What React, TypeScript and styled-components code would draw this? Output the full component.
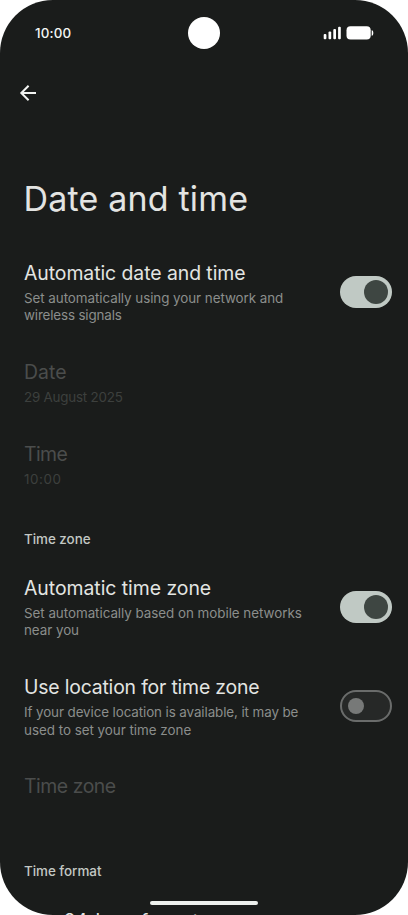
import React from 'react';
import styled, { createGlobalStyle } from 'styled-components';

const GlobalStyle = createGlobalStyle`
  * { box-sizing: border-box; }
  html, body { margin: 0; background: #fff; }
  body { font-family: Inter, Roboto, sans-serif; }
`;

const Screen = styled.main`
  position: relative;
  width: 408px;
  height: 915px;
  overflow: hidden;
  border-radius: 53px;
  background: #1a1c1b;
`;

const StatusBar = styled.header`
  display: grid;
  grid-template-columns: 1fr 32px 1fr;
  align-items: center;
  height: 65px;
  padding: 0 34px 0 33px;
  color: #f4f6f4;
`;

const Clock = styled.time`
  padding: 1px 0 0 2px;
  font-size: 13.4px;
  font-weight: 500;
  letter-spacing: 0.14px;
`;

const Camera = styled.div`
  width: 32px;
  height: 32px;
  border-radius: 50%;
  background: #fff;
`;

const StatusIcons = styled.svg`
  justify-self: end;
  display: block;
  margin-top: 1px;
`;

const NavBar = styled.nav`
  display: flex;
  align-items: center;
  height: 56px;
  padding-left: 16px;
`;

const BackButton = styled.button`
  display: flex;
  padding: 0;
  border: 0;
  background: none;
  color: #f1f3f1;
`;

const PageTitle = styled.h1`
  margin: 58px 0 0;
  padding-left: 23.6px;
  height: 63.8px;
  font-size: 34px;
  font-weight: 400;
  line-height: 40px;
  letter-spacing: 0.17px;
  color: #e3e4e2;
`;

const Row = styled.section`
  display: flex;
  align-items: center;
  justify-content: space-between;
  padding: 18px 16px 17px 24px;
`;

const SectionLabel = styled.h2<{ $tall?: boolean }>`
  margin: 0;
  height: ${p => (p.$tall ? 76 : 52.1)}px;
  padding: ${p => (p.$tall ? 46.2 : 23.2)}px 24px 0;
  font-size: 13.4px;
  font-weight: 500;
  line-height: 20px;
  letter-spacing: -0.02px;
  color: #c3c8c4;
`;

const Label = styled.div<{ $spacing: number; $disabled?: boolean }>`
  font-size: 19.4px;
  line-height: 24px;
  white-space: nowrap;
  letter-spacing: ${p => p.$spacing}px;
  color: ${p => (p.$disabled ? '#4b4d4c' : '#e3e5e2')};
`;

const Summary = styled.div<{ $disabled?: boolean }>`
  margin-top: 5.1px;
  font-size: 13.4px;
  line-height: 17.6px;
  color: ${p => (p.$disabled ? '#3d403e' : '#8b8e8c')};
`;

const SummaryLine = styled.div<{ $spacing: number }>`
  white-space: nowrap;
  letter-spacing: ${p => p.$spacing}px;
`;

const Track = styled.button<{ $on: boolean }>`
  display: flex;
  align-items: center;
  justify-content: ${p => (p.$on ? 'flex-end' : 'flex-start')};
  flex: none;
  width: 52px;
  height: 32px;
  margin-bottom: 2.2px;
  padding: ${p => (p.$on ? '0 4px' : '0 6px')};
  border: ${p => (p.$on ? '0' : '2px solid #6a6c6b')};
  border-radius: 16px;
  background: ${p => (p.$on ? '#c0c9c4' : '#262827')};
`;

const Thumb = styled.span<{ $on: boolean }>`
  width: ${p => (p.$on ? 24 : 16)}px;
  height: ${p => (p.$on ? 24 : 16)}px;
  border-radius: 50%;
  background: ${p => (p.$on ? '#3e4642' : '#777978')};
`;

const HomeBar = styled.div`
  position: absolute;
  left: 150px;
  bottom: 10px;
  width: 108px;
  height: 4px;
  border-radius: 2px;
  background: #edf0ed;
`;

interface SettingProps {
  label: string;
  spacing: number;
  lines?: [string, number][];
  disabled?: boolean;
  on?: boolean;
}

function Setting({ label, spacing, lines, disabled, on }: SettingProps) {
  return (
    <Row>
      <div>
        <Label $spacing={spacing} $disabled={disabled}>{label}</Label>
        {lines && (
          <Summary $disabled={disabled}>
            {lines.map(([text, ls]) => <SummaryLine key={text} $spacing={ls}>{text}</SummaryLine>)}
          </Summary>
        )}
      </div>
      {on !== undefined && (
        <Track $on={on} role="switch" aria-checked={on} aria-label={label}><Thumb $on={on} /></Track>
      )}
    </Row>
  );
}

export default function App() {
  return (
    <>
      <GlobalStyle />
      <Screen>
        <StatusBar>
          <Clock>10:00</Clock>
          <Camera />
          <StatusIcons width="51" height="14" viewBox="0 0 51 14" fill="#fff">
            <rect x="0.7" y="8" width="2.7" height="5.3" rx="1" />
            <rect x="5.5" y="5.4" width="2.7" height="7.9" rx="1" />
            <rect x="10.3" y="3" width="2.7" height="10.3" rx="1" />
            <rect x="15.1" y="0.8" width="2.7" height="12.5" rx="1" />
            <rect x="23.5" y="0.2" width="24.2" height="13.4" rx="4" />
            <path d="M48.7 4.2c1.2.2 1.6 1.2 1.6 2.8s-.4 2.6-1.6 2.8z" />
          </StatusIcons>
        </StatusBar>
        <NavBar>
          <BackButton aria-label="Back">
            <svg width="24" height="24" viewBox="0 0 24 24" fill="none" stroke="currentColor" strokeWidth="2">
              <path d="M20 12H5.5M12.6 4.7 5.3 12l7.3 7.3" />
            </svg>
          </BackButton>
        </NavBar>
        <PageTitle>Date and time</PageTitle>
        <Setting label="Automatic date and time" spacing={-0.055} on
          lines={[['Set automatically using your network and', -0.055], ['wireless signals', -0.15]]} />
        <Setting label="Date" spacing={0.1} disabled lines={[['29 August 2025', -0.22]]} />
        <Setting label="Time" spacing={-0.55} disabled lines={[['10:00', 0.6]]} />
        <SectionLabel>Time zone</SectionLabel>
        <Setting label="Automatic time zone" spacing={-0.03} on
          lines={[['Set automatically based on mobile networks', -0.04], ['near you', -0.05]]} />
        <Setting label="Use location for time zone" spacing={-0.18} on={false}
          lines={[['If your device location is available, it may be', -0.1], ['used to set your time zone', -0.02]]} />
        <Setting label="Time zone" spacing={-0.45} disabled />
        <SectionLabel $tall>Time format</SectionLabel>
        <Setting label="Use 24-hour format" spacing={-0.4} />
        <HomeBar />
      </Screen>
    </>
  );
}
